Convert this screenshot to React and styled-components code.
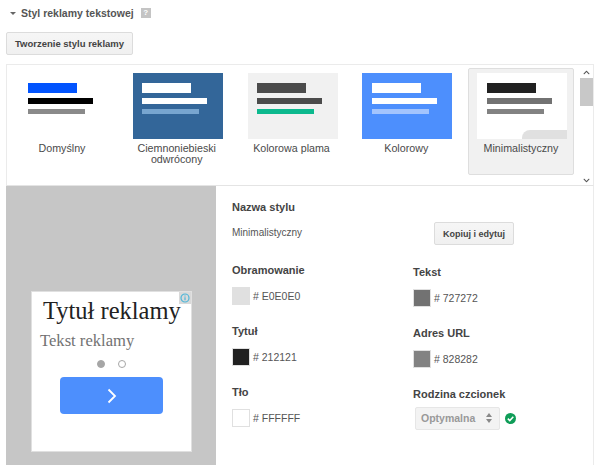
import React from "react";
import styled, { createGlobalStyle } from "styled-components";
import { FaChevronUp, FaChevronDown } from "react-icons/fa";

const GlobalStyle = createGlobalStyle`
  html, body {
    margin: 0;
    padding: 0;
    height: 465px;
    overflow: hidden;
    background: #fff;
    font-family: "Liberation Sans", Arial, sans-serif;
    color: #444;
  }
`;

const Page = styled.div`
  width: 600px;
  height: 465px;
  overflow: hidden;
  padding: 6px 6px 0;
  box-sizing: border-box;
`;

const Header = styled.div`
  display: flex;
  align-items: center;
  height: 14px;
  padding-left: 4px;
  font-size: 10.5px;
  font-weight: bold;
  color: #555;
`;

const Caret = styled.span`
  width: 0;
  height: 0;
  border-left: 3px solid transparent;
  border-right: 3px solid transparent;
  border-top: 3px solid #666;
  margin-right: 5px;
`;

const HelpIcon = styled.span`
  width: 10px;
  height: 10px;
  margin-left: 7px;
  background: #c4c4c4;
  color: #fff;
  font-size: 8px;
  line-height: 10px;
  text-align: center;
`;

const Button = styled.button`
  display: block;
  height: 23px;
  padding: 0;
  width: ${(p) => p.$width}px;
  background: linear-gradient(#f6f6f6, #f0f0f0);
  border: 1px solid #dcdcdc;
  border-radius: 2px;
  font-family: inherit;
  font-size: ${(p) => p.$size}px;
  font-weight: bold;
  color: #444;
`;

const CreateButton = styled(Button)`
  margin-top: 12px;
`;

const Box = styled.div`
  margin-top: 9px;
  width: 588px;
  height: 410px;
  box-sizing: border-box;
`;

const Gallery = styled.div`
  display: flex;
  height: 122px;
  box-sizing: border-box;
  border: 1px solid #ebebeb;
  border-bottom-color: #e4e4e4;
`;

const Items = styled.div`
  flex: 1;
  display: flex;
  gap: 8.75px;
  padding: 3px 0 0 2px;
`;

const Item = styled.div`
  width: 106px;
  height: 107px;
  box-sizing: border-box;
  padding: 4px 8px 0;
  border: 1px solid ${(p) => (p.$selected ? "#dedede" : "transparent")};
  border-radius: 2px;
  background: ${(p) => (p.$selected ? "#f1f1f1" : "transparent")};
`;

const Tile = styled.div`
  position: relative;
  overflow: hidden;
  width: 90px;
  height: 66px;
  box-sizing: border-box;
  padding-top: 10px;
  padding-left: 9.5px;
  background: ${(p) => p.$bg};
`;

const Bar = styled.div`
  width: ${(p) => p.$w}px;
  height: ${(p) => p.$h}px;
  margin-bottom: ${(p) => p.$mb}px;
  background: ${(p) => p.$color};
`;

const Corner = styled.div`
  position: absolute;
  right: 0;
  bottom: 0;
  width: 45px;
  height: 9px;
  background: #e0e0e0;
  border-top-left-radius: 8px;
`;

const Label = styled.div`
  margin-top: 4px;
  font-size: 10.7px;
  line-height: 11px;
  text-align: center;
  color: #4a4a4a;
`;

const Scrollbar = styled.div`
  width: 13px;
  display: flex;
  flex-direction: column;
  align-items: center;
  padding-top: 4px;
  box-sizing: border-box;
  color: #555;
`;

const Thumb = styled.div`
  width: 13px;
  height: 28px;
  margin: 2px 0 auto;
  background: #c8c8c8;
`;

const BottomArrow = styled.div`
  height: 15px;
`;

const Lower = styled.div`
  display: flex;
  height: 288px;
  border-right: 1px solid #ebebeb;
`;

const Preview = styled.div`
  width: 210px;
  flex: none;
  box-sizing: border-box;
  padding: 105px 0 0 25px;
  background: #c6c6c6;
`;

const Ad = styled.div`
  position: relative;
  width: 161px;
  height: 161px;
  box-sizing: border-box;
  border: 1px solid #e0e0e0;
  background: #fff;
`;

const AdInfo = styled.span`
  position: absolute;
  top: 0;
  right: 0;
  width: 12px;
  height: 12px;
  background: #d9d9d9;
  display: flex;
  align-items: center;
  justify-content: center;
`;

const AdTitle = styled.div`
  margin-top: 4px;
  padding-left: 11px;
  font-family: "Liberation Serif", serif;
  font-size: 24.5px;
  line-height: 30px;
  color: #212121;
  white-space: nowrap;
`;

const AdText = styled.div`
  margin-top: 4px;
  padding-left: 8px;
  font-family: "Liberation Serif", serif;
  font-size: 16.6px;
  line-height: 22px;
  color: #727272;
`;

const Dots = styled.div`
  display: flex;
  justify-content: center;
  gap: 13px;
  margin-top: 8px;
  padding-right: 1px;
`;

const Dot = styled.span`
  width: 8px;
  height: 8px;
  box-sizing: border-box;
  border-radius: 50%;
  border: 1px solid #a6a6a6;
  background: ${(p) => (p.$on ? "#a6a6a6" : "#fff")};
`;

const Cta = styled.div`
  display: flex;
  align-items: center;
  justify-content: center;
  width: 103px;
  height: 37px;
  margin: 9px 0 0 28px;
  border-radius: 4px;
  background: #4d8ffd;
`;

const Details = styled.div`
  flex: 1;
  display: flex;
  padding: 14px 0 0 16px;
`;

const LeftCol = styled.div`
  width: 181px;
  flex: none;
`;

const RightCol = styled.div`
  padding-top: 64.5px;
`;

const Heading = styled.div`
  font-size: 11px;
  font-weight: bold;
  line-height: 14px;
  color: #444;
  white-space: nowrap;
`;

const StyleRow = styled.div`
  display: flex;
  align-items: center;
  justify-content: space-between;
  width: 282px;
  height: 23px;
  margin-top: 8px;
  font-size: 10px;
  color: #555;
`;

const StyleName = styled.span`
  padding-bottom: 2px;
`;

const Field = styled.div`
  height: 61px;
`;

const FirstField = styled(Field)`
  margin-top: 18px;
`;

const ColorRow = styled.div`
  display: flex;
  align-items: center;
  gap: 3px;
  margin-top: 10px;
  font-size: 10.5px;
  color: #555;
`;

const Swatch = styled.span`
  width: 18px;
  height: 18px;
  box-sizing: border-box;
  border: 1px solid #e0e0e0;
  background: ${(p) => p.$color};
`;

const FontRow = styled.div`
  display: flex;
  align-items: center;
  gap: 5px;
  margin-top: 6px;
  padding-left: 2px;
`;

const Select = styled.div`
  display: flex;
  align-items: center;
  justify-content: space-between;
  width: 85px;
  height: 23px;
  box-sizing: border-box;
  padding: 0 7px 0 5px;
  background: #f3f3f3;
  border: 1px solid #e6e6e6;
  border-radius: 2px;
  font-size: 10.5px;
  font-weight: bold;
  color: #999;
`;

const Arrows = styled.svg`
  width: 6px;
  height: 10px;
`;

const themes = [
  { name: "Domyślny", bg: "#fff", bars: ["#0254fe", "#000", "#8a8a8a"] },
  { name: "Ciemnoniebieski odwrócony", bg: "#336699", bars: ["#fff", "#fff", "#78a5cf"] },
  { name: "Kolorowa plama", bg: "#f1f1f1", bars: ["#4b4b4b", "#4b4b4b", "#0cb98e"] },
  { name: "Kolorowy", bg: "#4d8ffd", bars: ["#fff", "#fff", "#a3c4fd"] },
  { name: "Minimalistyczny", bg: "#fff", bars: ["#212121", "#727272", "#828282"], selected: true },
];

const ColorField = ({ title, value, as: Wrap = Field }) => (
  <Wrap>
    <Heading>{title}</Heading>
    <ColorRow>
      <Swatch $color={`#${value}`} />
      <span># {value}</span>
    </ColorRow>
  </Wrap>
);

export default function App() {
  return (
    <Page>
      <GlobalStyle />
      <Header>
        <Caret />
        Styl reklamy tekstowej
        <HelpIcon>?</HelpIcon>
      </Header>
      <CreateButton $width={127} $size={9.5}>Tworzenie stylu reklamy</CreateButton>
      <Box>
        <Gallery>
          <Items>
            {themes.map((t) => (
              <Item key={t.name} $selected={t.selected}>
                <Tile $bg={t.bg}>
                  <Bar $w={49} $h={10} $mb={5} $color={t.bars[0]} />
                  <Bar $w={65} $h={6} $mb={5} $color={t.bars[1]} />
                  <Bar $w={57} $h={5} $mb={0} $color={t.bars[2]} />
                  {t.selected && <Corner />}
                </Tile>
                <Label>{t.name}</Label>
              </Item>
            ))}
          </Items>
          <Scrollbar>
            <FaChevronUp size={7} />
            <Thumb />
            <BottomArrow>
              <FaChevronDown size={7} />
            </BottomArrow>
          </Scrollbar>
        </Gallery>
        <Lower>
          <Preview>
            <Ad>
              <AdInfo>
                <svg width="10" height="10" viewBox="0 0 10 10">
                  <circle cx="5" cy="5" r="4" fill="none" stroke="#4db6d8" strokeWidth="1.2" />
                  <path d="M5 4.2v3M5 2.4v1" stroke="#4db6d8" strokeWidth="1.2" />
                </svg>
              </AdInfo>
              <AdTitle>Tytuł reklamy</AdTitle>
              <AdText>Tekst reklamy</AdText>
              <Dots>
                <Dot $on />
                <Dot />
              </Dots>
              <Cta>
                <svg width="10" height="16" viewBox="0 0 10 16">
                  <path d="M1.5 1.5 8 8l-6.5 6.5" fill="none" stroke="#fff" strokeWidth="1.8" />
                </svg>
              </Cta>
            </Ad>
          </Preview>
          <Details>
            <LeftCol>
              <Heading>Nazwa stylu</Heading>
              <StyleRow>
                <StyleName>Minimalistyczny</StyleName>
                <Button $width={80} $size={9}>Kopiuj i edytuj</Button>
              </StyleRow>
              <ColorField as={FirstField} title="Obramowanie" value="E0E0E0" />
              <ColorField title="Tytuł" value="212121" />
              <ColorField title="Tło" value="FFFFFF" />
            </LeftCol>
            <RightCol>
              <ColorField title="Tekst" value="727272" />
              <ColorField title="Adres URL" value="828282" />
              <Heading>Rodzina czcionek</Heading>
              <FontRow>
                <Select>
                  Optymalna
                  <Arrows viewBox="0 0 6 10">
                    <path d="M3 0 6 4H0zM3 10 0 6h6z" fill="#888" />
                  </Arrows>
                </Select>
                <svg width="11" height="11" viewBox="0 0 11 11">
                  <circle cx="5.5" cy="5.5" r="5.5" fill="#0f9d58" />
                  <path d="M2.8 5.6 4.8 7.6 8.3 3.8" fill="none" stroke="#fff" strokeWidth="1.5" />
                </svg>
              </FontRow>
            </RightCol>
          </Details>
        </Lower>
      </Box>
    </Page>
  );
}
